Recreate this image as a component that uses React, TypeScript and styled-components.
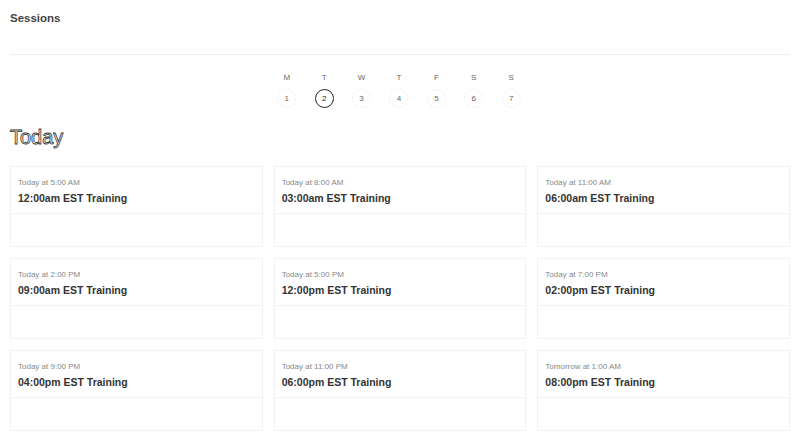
import React from "react";
import styled, { createGlobalStyle } from "styled-components";

const Global = createGlobalStyle`
  html, body { margin: 0; padding: 0; background: #fff; overflow: hidden; }
  body { font-family: "Liberation Sans", Arial, sans-serif; }
`;

const Page = styled.div`
  padding: 0 10px;
  width: 780px;
`;

const Header = styled.header`
  height: 55px;
  border-bottom: 1px solid #ededed;
  box-sizing: border-box;
  padding-top: 11px;
`;

const Title = styled.h1`
  margin: 0;
  font-size: 11.5px;
  font-weight: 700;
  color: #444;
  line-height: 14px;
`;

const Week = styled.div`
  display: flex;
  justify-content: center;
  padding-top: 17px;
  margin-left: -2px;
`;

const DayCol = styled.div`
  width: 37.4px;
  display: flex;
  flex-direction: column;
  align-items: center;
`;

const DayLetter = styled.span`
  font-size: 8px;
  color: #666;
  line-height: 12px;
  height: 12px;
`;

const DayNum = styled.span<{ $active?: boolean }>`
  margin-top: 5px;
  width: 19px;
  height: 19px;
  box-sizing: border-box;
  border-radius: 50%;
  border: 1px ${(p) => (p.$active ? "solid #222" : "dashed #eee")};
  display: flex;
  align-items: center;
  justify-content: center;
  font-size: 8px;
  color: ${(p) => (p.$active ? "#222" : "#666")};
`;

const Today = styled.h2`
  margin: 18px 0 0;
  font-size: 20px;
  font-weight: 400;
  line-height: 22px;
  color: #fff;
  -webkit-text-stroke: 0.8px #333;
`;

const Grid = styled.div`
  display: grid;
  grid-template-columns: repeat(3, 1fr);
  column-gap: 11px;
  row-gap: 11px;
  margin-top: 18px;
`;

const Card = styled.div`
  height: 81px;
  border: 1px solid #f1f1f1;
  box-sizing: border-box;
  display: flex;
  flex-direction: column;
`;

const CardHead = styled.div`
  height: 47px;
  box-sizing: border-box;
  border-bottom: 1px solid #f0f0f0;
  padding: 11px 7px 0;
`;

const When = styled.div`
  font-size: 8px;
  color: #888;
  line-height: 10px;
`;

const Name = styled.div`
  margin-top: 4px;
  font-size: 10.5px;
  font-weight: 700;
  color: #333;
  line-height: 13px;
`;

const days = ["M", "T", "W", "T", "F", "S", "S"];

const sessions = [
  ["Today at 5:00 AM", "12:00am EST Training"],
  ["Today at 8:00 AM", "03:00am EST Training"],
  ["Today at 11:00 AM", "06:00am EST Training"],
  ["Today at 2:00 PM", "09:00am EST Training"],
  ["Today at 5:00 PM", "12:00pm EST Training"],
  ["Today at 7:00 PM", "02:00pm EST Training"],
  ["Today at 9:00 PM", "04:00pm EST Training"],
  ["Today at 11:00 PM", "06:00pm EST Training"],
  ["Tomorrow at 1:00 AM", "08:00pm EST Training"],
];

export default function App() {
  return (
    <>
      <Global />
      <Page>
        <Header>
          <Title>Sessions</Title>
        </Header>
        <Week>
          {days.map((d, i) => (
            <DayCol key={i}>
              <DayLetter>{d}</DayLetter>
              <DayNum $active={i === 1}>{i + 1}</DayNum>
            </DayCol>
          ))}
        </Week>
        <Today>Today</Today>
        <Grid>
          {sessions.map(([w, n], i) => (
            <Card key={i}>
              <CardHead>
                <When>{w}</When>
                <Name>{n}</Name>
              </CardHead>
            </Card>
          ))}
        </Grid>
      </Page>
    </>
  );
}
